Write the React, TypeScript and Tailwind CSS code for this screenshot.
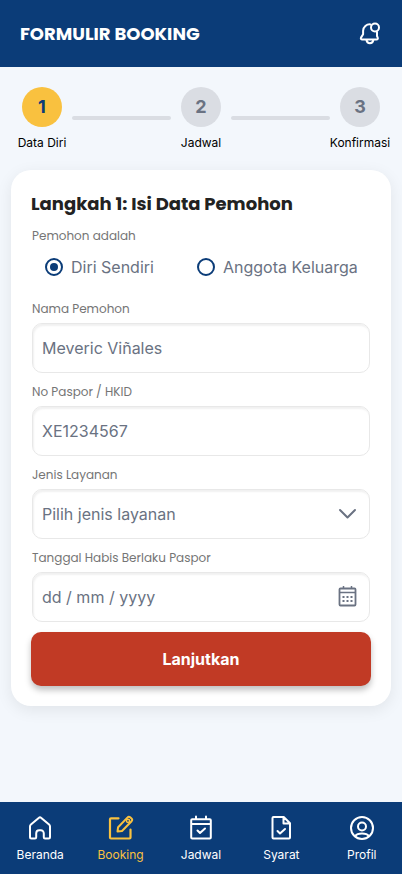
import React, { useState } from "react";

const heading = "font-[Poppins,Inter,sans-serif]";

function Bell() {
  return (
    <svg width="24" height="24" viewBox="0 0 24 24" fill="none" stroke="currentColor" strokeWidth="2" strokeLinejoin="round" strokeLinecap="round" aria-hidden="true">
      <path d="M12.500 2.400C8.500 2 5.300 4.800 5.100 8.800v3.400L3 15.600c-.5 1.100.1 1.900 1.200 1.900h14.300c1.100 0 1.700-.8 1.200-1.900L19 14V10" />
      <path d="M8.500 18c.3 2 1.600 3.200 3.400 3.200s3.100-1.200 3.400-3.200" />
      <circle cx="17" cy="5.500" r="4" />
    </svg>
  );
}

function Chevron() {
  return (
    <svg width="20" height="12" viewBox="0 0 20 12" fill="none" stroke="currentColor" strokeWidth="2" strokeLinecap="round" strokeLinejoin="round" aria-hidden="true">
      <path d="M2 2 9.500 9.500 17 2" />
    </svg>
  );
}

function CalendarGrid() {
  return (
    <svg width="20" height="22" viewBox="0 0 20 22" fill="none" stroke="currentColor" strokeWidth="2" strokeLinejoin="round" aria-hidden="true">
      <rect x="1.500" y="2.500" width="16" height="17" rx="1" strokeWidth="1.800" />
      <path strokeWidth="1.500" d="M2 6.500h15M5.500 0v3M13.500 0v3" />
      <path d="M4.500 11h2M8.500 11h2M12.500 11h2M4.500 15h2M8.500 15h2M12.500 15h2" />
    </svg>
  );
}

function NavSvg({ children }: { children: React.ReactNode }) {
  return (
    <svg width="26" height="26" viewBox="0 0 26 26" fill="none" stroke="currentColor" strokeWidth="2" strokeLinecap="round" strokeLinejoin="round" aria-hidden="true">
      {children}
    </svg>
  );
}

const navItems = [
  {
    label: "Beranda",
    icon: (
      <NavSvg>
        <path d="M3 11.500c0-.8.3-1.400.9-1.900l7.800-6.700c.8-.7 1.800-.7 2.600 0l7.800 6.700c.6.5.9 1.100.9 1.900V22c0 1-.5 1.500-1.500 1.500H18c-.8 0-1.200-.4-1.200-1.200V18.500c0-2-1.300-3.300-3-3.300h-1.600c-1.700 0-3 1.300-3 3.300v3.800c0 .8-.4 1.200-1.200 1.200H4.500c-1 0-1.500-.5-1.500-1.500z" />
      </NavSvg>
    ),
  },
  {
    label: "Booking",
    active: true,
    icon: (
      <NavSvg>
        <path strokeWidth="2.200" d="M10.500 3.300H3c-.6 0-1 .4-1 1v18.200c0 .6.4 1 1 1h18.500c.6 0 1-.4 1-1V14.500" />
        <path d="M9.500 16.500l.6-4.300L19.600 2.400c.7-.8 1.800-.8 2.600-.1l1.300 1.200c.8.8.8 1.900.1 2.700L14 16z" />
        <circle cx="20" cy="5.800" r="1.600" strokeWidth="1.500" />
      </NavSvg>
    ),
  },
  {
    label: "Jadwal",
    icon: (
      <NavSvg>
        <path d="M4.200 4.200h17.600c.7 0 1 .3 1 1v17.300c0 .7-.3 1-1 1H4.200c-.7 0-1-.3-1-1V5.200c0-.7.3-1 1-1zM3.200 9h19.600M8 1.500v2.700M18 1.500v2.700M9.500 15.500l2.500 2.500 5-4.500" />
      </NavSvg>
    ),
  },
  {
    label: "Syarat",
    icon: (
      <NavSvg>
        <path d="M5.500 2h10.200l6.300 6.300v14.200c0 .6-.4 1-1 1H5.500c-.6 0-1-.4-1-1V3c0-.6.4-1 1-1zM15.500 2.300v6.200H22M9.500 16l2.500 2.500 5-4.500" />
      </NavSvg>
    ),
  },
  {
    label: "Profil",
    icon: (
      <NavSvg>
        <circle cx="13" cy="13" r="11" />
        <circle cx="13" cy="11.500" r="4" />
        <path d="M6 21.300c1.500-2.100 4-2.800 7-2.800s5.500.7 7 2.800" />
      </NavSvg>
    ),
  },
];

function Step({ n, label, active }: { n: number; label: string; active?: boolean }) {
  return (
    <li className="flex w-[60px] shrink-0 flex-col items-center gap-2">
      <span className={`flex size-10 items-center justify-center rounded-full text-lg font-bold ${active ? "bg-[#f9c13f] text-[#0b3c78]" : "bg-[#dadde3] text-gray-500"}`}>
        {n}
      </span>
      <span className="whitespace-nowrap text-xs leading-4 text-black">{label}</span>
    </li>
  );
}

function Line() {
  return <li aria-hidden="true" className="mt-[29px] h-1 flex-1 rounded-full bg-[#dadde3]" />;
}

const control =
  "h-[50px] w-full appearance-none rounded-[10px] border border-[#e8e8e8] bg-white pl-[9px] pr-12 text-base text-gray-500 shadow-[inset_1px_2px_2px_rgba(0,0,0,0.06)] outline-none placeholder:text-gray-500 placeholder:opacity-100";

function Field({ id, label, icon, children }: { id: string; label: string; icon?: React.ReactNode; children: React.ReactNode }) {
  return (
    <div className="flex flex-col gap-[5px] px-px">
      <label htmlFor={id} className={`${heading} text-xs leading-[18px] text-[#757575]`}>
        {label}
      </label>
      <div className="relative">
        {children}
        {icon && <span className="pointer-events-none absolute inset-y-0 right-3 flex items-center text-gray-500">{icon}</span>}
      </div>
    </div>
  );
}

function Radio({ label, checked, onChange }: { label: string; checked: boolean; onChange: () => void }) {
  return (
    <label className="flex items-center gap-2 whitespace-nowrap text-base leading-5 text-gray-500">
      <input
        type="radio"
        name="pemohon"
        checked={checked}
        onChange={onChange}
        className="size-[18px] appearance-none rounded-full border-2 border-[#0b3c78] bg-white p-[3px] before:block before:size-2 before:rounded-full checked:before:bg-[#0b3c78]"
      />
      {label}
    </label>
  );
}

export default function App() {
  const [who, setWho] = useState("self");
  return (
    <div className="flex min-h-screen flex-col bg-[#f3f7fc] font-[Inter,sans-serif]">
      <header className="flex h-[67px] items-center justify-between bg-[#0b3c78] px-5 text-white">
        <h1 className={`${heading} text-lg font-bold`}>FORMULIR BOOKING</h1>
        <button type="button" aria-label="Notifikasi">
          <Bell />
        </button>
      </header>

      <main className="flex-1">
        <ol className="flex px-3 pt-5">
          <Step n={1} label="Data Diri" active />
          <Line />
          <Step n={2} label="Jadwal" />
          <Line />
          <Step n={3} label="Konfirmasi" />
        </ol>

        <form onSubmit={(e) => e.preventDefault()} className="mx-[11px] mt-[19px] flex flex-col gap-[10px] rounded-[20px] bg-white p-5 shadow-[0_4px_16px_rgba(0,0,0,0.08)]">
          <h2 className={`${heading} text-lg leading-7 font-bold text-[#222222]`}>Langkah 1: Isi Data Pemohon</h2>

          <fieldset className="-mt-px mb-[13px] px-px">
            <legend className={`${heading} text-xs leading-[18px] text-[#757575]`}>Pemohon adalah</legend>
            <div className="flex gap-[43px] pt-3 pl-[13px]">
              <Radio label="Diri Sendiri" checked={who === "self"} onChange={() => setWho("self")} />
              <Radio label="Anggota Keluarga" checked={who === "family"} onChange={() => setWho("family")} />
            </div>
          </fieldset>

          <Field id="nama" label="Nama Pemohon">
            <input id="nama" type="text" defaultValue="Meveric Viñales" className={control} />
          </Field>
          <Field id="paspor" label="No Paspor / HKID">
            <input id="paspor" type="text" defaultValue="XE1234567" className={control} />
          </Field>
          <Field id="layanan" label="Jenis Layanan" icon={<Chevron />}>
            <select id="layanan" className={control}>
              <option>Pilih jenis layanan</option>
            </select>
          </Field>
          <Field id="tanggal" label="Tanggal Habis Berlaku Paspor" icon={<CalendarGrid />}>
            <input id="tanggal" type="text" placeholder="dd / mm / yyyy" className={control} />
          </Field>

          <button type="submit" className="h-[54px] rounded-[10px] bg-[#c13a25] text-base font-bold text-white shadow-[0_4px_6px_rgba(0,0,0,0.25)]">
            Lanjutkan
          </button>
        </form>
      </main>

      <nav className="grid h-[72px] grid-cols-5 bg-[#0b3c78]">
        {navItems.map((item) => (
          <a key={item.label} href="#" className={`flex flex-col items-center gap-1 pt-[13px] text-xs leading-5 ${item.active ? "text-[#f9c13f]" : "text-white"}`}>
            {item.icon}
            {item.label}
          </a>
        ))}
      </nav>
    </div>
  );
}
